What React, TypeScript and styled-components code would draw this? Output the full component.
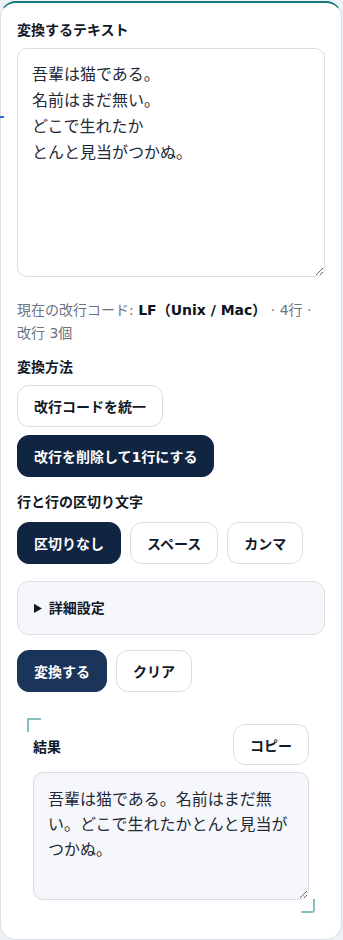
import React, { useState } from 'react';
import styled, { createGlobalStyle } from 'styled-components';

const GlobalStyle = createGlobalStyle`
  html, body {
    margin: 0;
    padding: 0;
    background: #eef2f7;
  }
  body {
    font-family: 'DejaVu Sans', 'Noto Sans CJK JP', sans-serif;
    color: #111827;
  }
`;

const Card = styled.div`
  position: relative;
  box-sizing: border-box;
  width: 342px;
  margin: 1px 1px 1px 0;
  padding: 17px 16px 26px;
  background: #ffffff;
  border: 1px solid #d9e0e9;
  border-top: 2px solid #12797d;
  border-radius: 16px;
`;

const EdgeMark = styled.span`
  position: absolute;
  left: -1px;
  top: 113px;
  width: 4px;
  height: 2px;
  background: #2f6fe6;
`;

const Label = styled.div<{ $mt?: number }>`
  margin-top: ${(p) => p.$mt ?? 0}px;
  font-size: 14px;
  line-height: 20px;
  font-weight: 700;
  color: #111827;
`;

const TextArea = styled.textarea<{
  $muted?: boolean;
  $h: number;
  $py: number;
  $lh: number;
  $mt?: number;
}>`
  display: block;
  box-sizing: border-box;
  width: 100%;
  height: ${(p) => p.$h}px;
  margin: ${(p) => p.$mt ?? 0}px 0 0;
  padding: ${(p) => p.$py}px 14px;
  border: 1px solid #d6dde7;
  border-radius: 10px;
  background: ${(p) => (p.$muted ? '#f5f7fb' : '#ffffff')};
  font-family: 'DejaVu Sans', 'Noto Sans CJK JP', sans-serif;
  font-size: 16px;
  line-height: ${(p) => p.$lh}px;
  color: #1f2937;
  outline: none;
`;

const Info = styled.p`
  margin: 22px 0 0;
  font-size: 14px;
  line-height: 23px;
  color: #6b7280;

  strong {
    color: #0b1220;
    font-weight: 700;
  }
`;

const Button = styled.button<{ $primary?: boolean; $tone?: string }>`
  box-sizing: border-box;
  height: 42px;
  padding: 0 16px;
  border-radius: 12px;
  border: 1px solid ${(p) => (p.$primary ? p.$tone ?? '#0f2541' : '#d6dde7')};
  background: ${(p) => (p.$primary ? p.$tone ?? '#0f2541' : '#ffffff')};
  color: ${(p) => (p.$primary ? '#ffffff' : '#111827')};
  font-family: 'DejaVu Sans', 'Noto Sans CJK JP', sans-serif;
  font-size: 14px;
  font-weight: 700;
  white-space: nowrap;
  cursor: pointer;
`;

const Stack = styled.div<{ $mt: number }>`
  display: flex;
  flex-direction: column;
  align-items: flex-start;
  gap: 8px;
  margin-top: ${(p) => p.$mt}px;
`;

const Row = styled.div<{ $mt: number }>`
  display: flex;
  gap: 9px;
  margin-top: ${(p) => p.$mt}px;
`;

const Details = styled.details`
  box-sizing: border-box;
  margin-top: 17px;
  padding: 16px 16px;
  border: 1px solid #d9e0e9;
  border-radius: 12px;
  background: #f5f7fb;

  summary {
    font-size: 14px;
    line-height: 20px;
    font-weight: 700;
    cursor: pointer;
  }
`;

const ResultBox = styled.section`
  position: relative;
  margin: 26px 10px 0 10px;
  padding: 6px 6px 13px;

  &::before,
  &::after {
    content: '';
    position: absolute;
    width: 12px;
    height: 12px;
    border-color: #86bfc2;
    border-style: solid;
  }
  &::before {
    top: 0;
    left: 0;
    border-width: 2px 0 0 2px;
    border-top-left-radius: 2px;
  }
  &::after {
    bottom: 0;
    right: 0;
    border-width: 0 2px 2px 0;
    border-bottom-right-radius: 3px;
  }
`;

const ResultHead = styled.div`
  display: flex;
  align-items: center;
  justify-content: space-between;
  margin-bottom: 7px;
`;

const ResultTitle = styled.span`
  font-size: 14px;
  font-weight: 700;
  color: #111827;
  margin-top: 2px;
`;

const CopyButton = styled(Button)`
  height: 41px;
`;

const initial = '吾輩は猫である。\n名前はまだ無い。\nどこで生れたか\nとんと見当がつかぬ。';

export default function App() {
  const [text, setText] = useState(initial);
  const result = text.split('\n').join('');

  return (
    <>
      <GlobalStyle />
      <Card>
        <EdgeMark />
        <Label>変換するテキスト</Label>
        <TextArea
          $mt={8}
          $h={229}
          $py={13}
          $lh={26}
          value={text}
          onChange={(e) => setText(e.target.value)}
        />
        <Info>
          現在の改行コード: <strong>LF（Unix / Mac）</strong> · 4行 · 改行 3個
        </Info>

        <Label $mt={12}>変換方法</Label>
        <Stack $mt={8}>
          <Button>改行コードを統一</Button>
          <Button $primary>改行を削除して1行にする</Button>
        </Stack>

        <Label $mt={15}>行と行の区切り文字</Label>
        <Row $mt={10}>
          <Button $primary>区切りなし</Button>
          <Button>スペース</Button>
          <Button>カンマ</Button>
        </Row>

        <Details>
          <summary>詳細設定</summary>
        </Details>

        <Row $mt={15}>
          <Button $primary $tone="#1b3459">変換する</Button>
          <Button>クリア</Button>
        </Row>

        <ResultBox>
          <ResultHead>
            <ResultTitle>結果</ResultTitle>
            <CopyButton>コピー</CopyButton>
          </ResultHead>
          <TextArea $muted $h={128} $py={14} $lh={25} readOnly value={result} />
        </ResultBox>
      </Card>
    </>
  );
}
